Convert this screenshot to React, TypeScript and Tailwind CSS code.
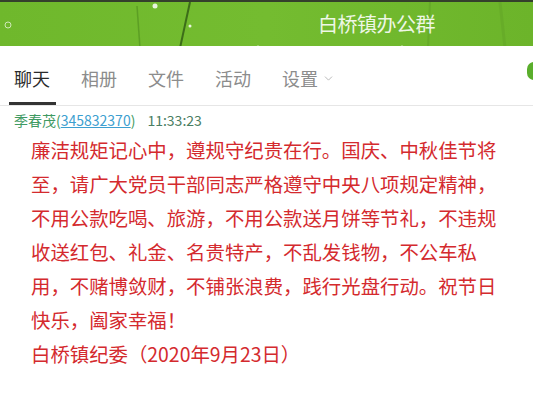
import { ChevronDown } from "lucide-react";

const font = { fontFamily: '"Microsoft YaHei", "Noto Sans CJK SC", sans-serif' };

const tabs = ["聊天", "相册", "文件", "活动", "设置"];

const lines = [
  "廉洁规矩记心中，遵规守纪贵在行。国庆、中秋佳节将",
  "至，请广大党员干部同志严格遵守中央八项规定精神，",
  "不用公款吃喝、旅游，不用公款送月饼等节礼，不违规",
  "收送红包、礼金、名贵特产，不乱发钱物，不公车私",
  "用，不赌博敛财，不铺张浪费，践行光盘行动。祝节日",
  "快乐，阖家幸福！",
  "白桥镇纪委（2020年9月23日）",
];

function Header() {
  return (
    <div className="relative h-[46px] overflow-hidden border-t-2 border-[#34402c] bg-gradient-to-r from-[#6fb82c] via-[#74bc30] to-[#6cb42a]">
      <svg className="absolute inset-0" width="533" height="46" viewBox="0 0 533 46">
        <path d="M137 4 L140 46" stroke="#4f8e1e" strokeWidth="1.5" opacity="0.6" />
        <path d="M190 0 L180 46" stroke="#2f5a14" strokeWidth="2" opacity="0.8" />
        <path d="M430 0 L428 46" stroke="#5a9a24" strokeWidth="2" opacity="0.4" />
        <path d="M500 0 L505 46" stroke="#5a9a24" strokeWidth="3" opacity="0.3" />
        <circle cx="155" cy="4" r="2.5" fill="#e8f5dc" />
        <circle cx="8" cy="23" r="3" fill="none" stroke="#cfe8b8" strokeWidth="1" />
        <circle cx="190" cy="24" r="1.5" fill="#e8f5dc" />
        <circle cx="258" cy="45" r="1.5" fill="#e8f5dc" />
        <circle cx="402" cy="45" r="1.5" fill="#e8f5dc" />
      </svg>
      <div className="relative flex h-full items-center pl-[318px]">
        <span className="text-[20px] tracking-[-0.5px] text-[#eef7e6]" style={font}>
          白桥镇办公群
        </span>
      </div>
    </div>
  );
}

export default function App() {
  return (
    <div className="h-[403px] w-[533px] overflow-hidden bg-white" style={font}>
      <Header />
      <div className="relative flex h-[60px] items-end gap-[31px] border-b border-[#e6e6e6] pl-[14px]">
        {tabs.map((t, i) => (
          <div key={t} className="relative flex items-center pb-[13px]">
            <span className={`text-[18px] ${i === 0 ? "text-[#2a2a2a]" : "text-[#8c8c8c]"}`}>{t}</span>
            {i === 4 && <ChevronDown className="ml-[4px] h-[13px] w-[13px] text-[#aaa]" strokeWidth={1.5} />}
            {i === 0 && <div className="absolute bottom-[0px] left-[-5px] right-[-6px] h-[3px] bg-[#333]" />}
          </div>
        ))}
        <div className="absolute right-[-8px] top-[16px] h-[18px] w-[14px] rounded-full bg-[#5aae2c]" />
      </div>
      <div className="flex items-center gap-[12px] pl-[14px] pt-[4px] text-[14px]">
        <span className="text-[#3f9a62]">
          季春茂(<span className="text-[#3d9fd0] underline">345832370</span>)
        </span>
        <span className="text-[#4a7d62]">11:33:23</span>
      </div>
      <div className="pl-[31px] pt-[2px] text-[19.4px] leading-[34px] text-[#d42a2e]">
        {lines.map((l) => (
          <div key={l} className="whitespace-nowrap">{l}</div>
        ))}
      </div>
    </div>
  );
}
